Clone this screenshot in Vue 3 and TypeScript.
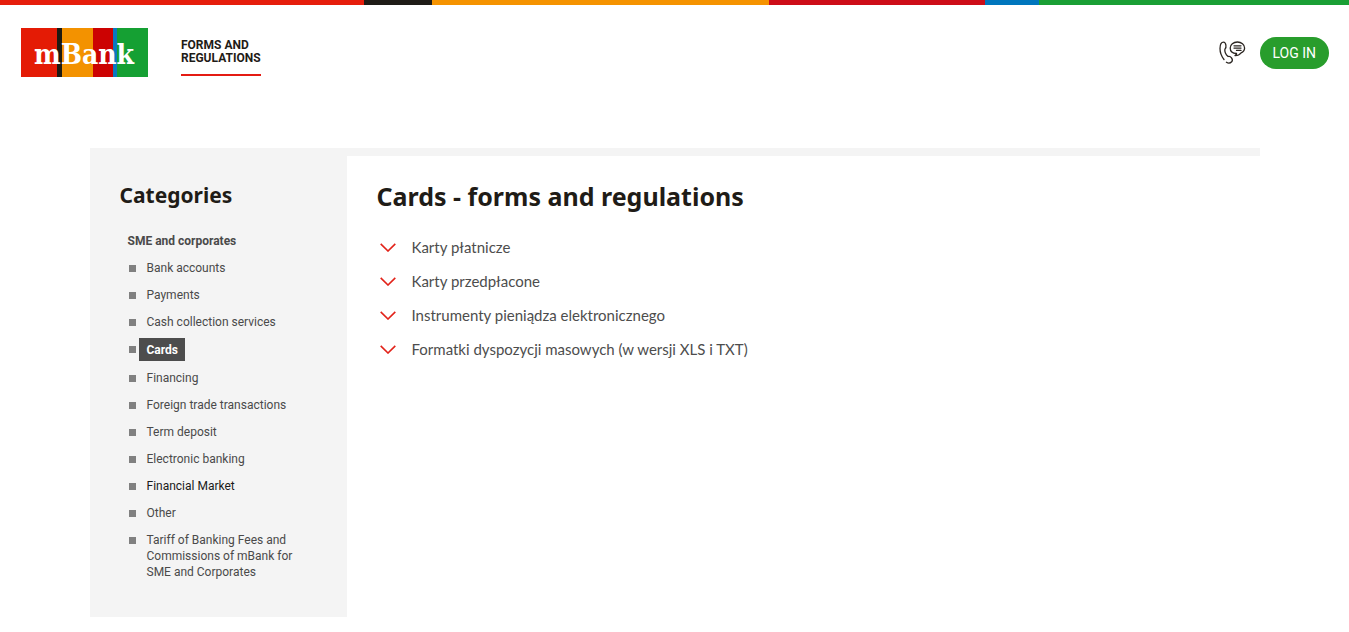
<script setup lang="ts">
import { ref } from 'vue'

interface Category {
  label: string
  strong?: boolean
}

const categories: Category[] = [
  { label: 'Bank accounts' },
  { label: 'Payments' },
  { label: 'Cash collection services' },
  { label: 'Cards' },
  { label: 'Financing' },
  { label: 'Foreign trade transactions' },
  { label: 'Term deposit' },
  { label: 'Electronic banking' },
  { label: 'Financial Market', strong: true },
  { label: 'Other' },
  { label: 'Tariff of Banking Fees and Commissions of mBank for SME and Corporates' },
]

const current = ref('Cards')

const sections: string[] = [
  'Karty płatnicze',
  'Karty przedpłacone',
  'Instrumenty pieniądza elektronicznego',
  'Formatki dyspozycji masowych (w wersji XLS i TXT)',
]
</script>

<template>
  <div class="page">
    <div class="stripe"></div>

    <header class="header">
      <a class="logo" href="#" aria-label="mBank">
        <svg width="127" height="49" viewBox="0 0 127 49">
          <rect width="36" height="49" fill="#e41b05" />
          <rect x="36" width="5" height="49" fill="#1d1a12" />
          <rect x="41" width="31" height="49" fill="#f39200" />
          <rect x="72" width="20" height="49" fill="#cc0202" />
          <rect x="92" width="4" height="49" fill="#0a79c0" />
          <rect x="96" width="31" height="49" fill="#15a033" />
          <text class="logo-text" x="63" y="36" text-anchor="middle">mBank</text>
        </svg>
      </a>
      <nav class="nav">
        <a class="nav-link" href="#">FORMS AND<br />REGULATIONS</a>
      </nav>
      <div class="actions">
        <a class="contact" href="#" aria-label="Contact">
          <svg width="27" height="24" viewBox="0 0 27 24" fill="none" stroke="#2b2622" stroke-width="1.3" stroke-linecap="round" stroke-linejoin="round">
            <path d="M5 18.500C2.600 15.600 1 11.600 1 7.600 1 4 2.200 1.200 4.600 1.200c1.400 0 1.900 1 2.300 3 .4 2.100.2 3-1 4-.4 2.600 1.100 5.600 3.200 7.300 1.500-.5 2.400-.1 3.400 1.400 1.300 1.900 1.300 2.800.2 3.900-1.400 1.400-3.500 1.600-5.300.5" />
            <path d="M16 14.600c.8-.5 1.300-1.200 1.500-2.100-3.700-.2-6.300-2.400-6.300-5.600C11.200 3.500 14.400 1 18.400 1s7.200 2.500 7.200 5.900c0 2.200-1.500 4-3.500 4.900-1.300 1.700-3.300 2.900-6.100 2.800Z" />
            <path d="M15 4.800h7M15 7.100h7M17.500 9.400h4.500" />
          </svg>
        </a>
        <button class="login" type="button">LOG IN</button>
      </div>
    </header>

    <div class="layout">
      <aside class="sidebar">
        <h2 class="sidebar-title">Categories</h2>
        <p class="group">SME and corporates</p>
        <ul class="categories">
          <li v-for="item in categories" :key="item.label" class="category">
            <a
              href="#"
              class="category-link"
              :class="{ active: item.label === current, strong: item.strong }"
              @click.prevent="current = item.label"
            >{{ item.label }}</a>
          </li>
        </ul>
      </aside>

      <main class="content">
        <h1 class="title">Cards - forms and regulations</h1>
        <div class="sections">
          <button v-for="name in sections" :key="name" class="section" type="button">
            <svg width="16" height="9" viewBox="0 0 16 9" fill="none" stroke="#e2231a" stroke-width="1.6">
              <path d="M.7.9 8 8 15.300.9" />
            </svg>
            <span>{{ name }}</span>
          </button>
        </div>
      </main>
    </div>
  </div>
</template>

<style>
body {
  margin: 0;
  background: #fff;
}
</style>

<style scoped>
.page {
  font-family: 'Noto Sans', sans-serif;
  color: #1f1c17;
}

.stripe {
  height: 5px;
  background: linear-gradient(
    90deg,
    #e61e0c 0 27%,
    #1f1c17 27% 32%,
    #f59300 32% 57%,
    #cd0d18 57% 73%,
    #0076bd 73% 77%,
    #1a9f35 77%
  );
}

.header {
  display: flex;
  align-items: center;
  height: 95px;
  padding: 0 20px 0 21px;
}

.logo svg {
  display: block;
}

.logo-text {
  font-family: 'DejaVu Serif Condensed', 'DejaVu Serif', serif;
  font-size: 28px;
  font-weight: 700;
  fill: #fff;
}

.nav {
  margin-left: 33px;
}

.nav-link {
  display: block;
  padding: 10px 0 9px;
  border-bottom: 2px solid #e41b13;
  color: #1f1c17;
  font-family: Roboto, sans-serif;
  font-size: 12px;
  font-weight: 700;
  line-height: 13px;
  text-decoration: none;
}

.actions {
  display: flex;
  align-items: center;
  gap: 14px;
  margin-left: auto;
}

.contact svg {
  display: block;
}

.login {
  height: 32px;
  padding: 0 13px 0 12px;
  border: 0;
  border-radius: 16px;
  background: #289d2c;
  color: #fff;
  font-family: Roboto, sans-serif;
  font-size: 14px;
}

.layout {
  display: flex;
  max-width: 1170px;
  margin: 48px auto 15px;
}

.sidebar {
  box-sizing: border-box;
  flex: 0 0 257px;
  padding: 32px 48px 26px 30px;
  background: #f4f4f4;
}

.sidebar-title {
  margin: 0;
  font-size: 21px;
  line-height: 30px;
}

.group {
  margin: 23px 0 11px 8px;
  color: #4a4a4a;
  font-family: Roboto, sans-serif;
  font-size: 12px;
  font-weight: 700;
  line-height: 16px;
}

.categories {
  margin: 0;
  padding: 0 0 0 9px;
  list-style: none;
}

.category {
  display: flex;
  align-items: flex-start;
  gap: 11px;
  margin-bottom: 11px;
}

.category::before {
  content: '';
  flex: none;
  width: 7px;
  height: 7px;
  margin-top: 5px;
  background: #808080;
}

.category-link {
  color: #4a4a4a;
  font-family: Roboto, sans-serif;
  font-size: 12px;
  line-height: 16px;
  text-decoration: none;
}

.category-link.strong {
  color: #1a1a1a;
}

.category-link.active {
  margin: -3px -8px -2px;
  padding: 4px 7px 3px 8px;
  background: #4d4d4d;
  color: #fff;
  font-weight: 700;
}

.content {
  flex: 1;
  min-width: 0;
  padding: 24px 30px;
  border-top: 8px solid #f4f4f4;
}

.title {
  margin: 0;
  font-size: 25px;
  line-height: 32px;
}

.sections {
  display: flex;
  flex-direction: column;
  align-items: flex-start;
  margin-top: 18px;
}

.section {
  display: flex;
  align-items: center;
  gap: 16px;
  padding: 7px 3px;
  border: 0;
  background: none;
  color: #4d4d4d;
  font-family: Lato, sans-serif;
  font-size: 15px;
  line-height: 20px;
  text-align: left;
}
</style>
